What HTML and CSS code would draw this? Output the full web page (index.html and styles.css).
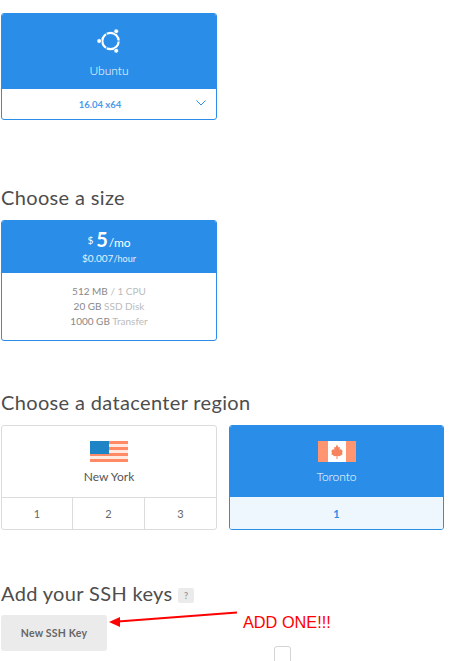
FILE: index.html
```html
<!DOCTYPE html>
<html lang="en">
<head>
    <meta charset="UTF-8">
    <title>Create Droplet</title>
    <link rel="stylesheet" href="styles.css">
</head>
<body>

<div class="page">
    <!-- image -->
    <div class="card selected">
        <div class="card-top image-top">
            <svg class="ubuntu-icon" width="26" height="26" viewBox="0 0 26 26">
                <circle cx="14.5" cy="13" r="8.2" fill="none" stroke="#fff" stroke-width="2.2"/>
                <g stroke="#2a8ee9" stroke-width="1">
                    <line x1="14.5" y1="13" x2="25" y2="13"/>
                    <line x1="14.5" y1="13" x2="9" y2="3.5"/>
                    <line x1="14.5" y1="13" x2="9" y2="22.5"/>
                </g>
                <circle cx="3.2" cy="13" r="2.3" fill="#fff" stroke="#2a8ee9" stroke-width="0.6"/>
                <circle cx="20.2" cy="3.2" r="2.3" fill="#fff" stroke="#2a8ee9" stroke-width="0.6"/>
                <circle cx="20.2" cy="22.8" r="2.3" fill="#fff" stroke="#2a8ee9" stroke-width="0.6"/>
            </svg>
            <div class="card-name name-ubuntu">Ubuntu</div>
        </div>
        <div class="version-row">
            <span class="version">16.04 x64</span>
            <svg class="chevron" width="10" height="6" viewBox="0 0 10 6">
                <path d="M0.5 0.5 L5 5 L9.5 0.5" fill="none" stroke="#2a8ee9" stroke-width="1"/>
            </svg>
        </div>
    </div>

    <h2 class="heading heading-size">Choose a size</h2>
    <div class="card selected">
        <div class="card-top size-top">
            <div class="price"><span class="dollar">$</span><span class="amount">5</span><span class="per">/mo</span></div>
            <div class="hourly">$0.007<span class="per-hour">/hour</span></div>
        </div>
        <div class="size-specs">
            <div><b>512 MB</b> / 1 CPU</div>
            <div><b>20 GB</b> SSD Disk</div>
            <div><b>1000 GB</b> Transfer</div>
        </div>
    </div>

    <h2 class="heading heading-region">Choose a datacenter region</h2>
    <div class="regions">
        <div class="card region">
            <div class="region-top">
                <svg width="38" height="21" viewBox="0 0 38 21">
                    <rect width="38" height="21" fill="#ffe9e0"/>
                    <rect y="0" width="38" height="3" fill="#ff8a65"/>
                    <rect y="6" width="38" height="3" fill="#ff8a65"/>
                    <rect y="12" width="38" height="3" fill="#ff8a65"/>
                    <rect y="18" width="38" height="3" fill="#ff8a65"/>
                    <rect width="19" height="13" fill="#1f84c6"/>
                </svg>
                <div class="card-name name-dark">New York</div>
            </div>
            <div class="datacenters">
                <div class="dc">1</div>
                <div class="dc">2</div>
                <div class="dc">3</div>
            </div>
        </div>
        <div class="card region region-right selected">
            <div class="region-top blue">
                <svg width="38" height="21" viewBox="0 0 38 21">
                    <rect width="38" height="21" fill="#fff"/>
                    <rect width="10" height="21" fill="#ff9571"/>
                    <rect x="28" width="10" height="21" fill="#ff9571"/>
                    <path d="M19 3.5 L20.6 6.5 L22 6 L21.6 9 L23 8 L24.6 10 L24 12.4 L25 13 L21.5 15.2 L19.5 15 L19.5 18 L18.5 18 L18.5 15 L16.5 15.2 L13 13 L14 12.4 L13.4 10 L15 8 L16.4 9 L16 6 L17.4 6.5 Z" fill="#f5845c"/>
                </svg>
                <div class="card-name">Toronto</div>
            </div>
            <div class="datacenters dc-selected">
                <div class="dc">1</div>
            </div>
        </div>
    </div>

    <h2 class="heading heading-ssh">Add your SSH keys <span class="help">?</span></h2>
    <button class="ssh-btn">New SSH Key</button>
    <div class="fake-check"></div>

    <!-- annotation on top of the screenshot -->
    <svg class="arrow" width="130" height="24" viewBox="0 0 130 24">
        <line x1="128" y1="2.5" x2="9" y2="11.5" stroke="#f00" stroke-width="2"/>
        <path d="M0 12 L11 7 L11 17 Z" fill="#f00"/>
    </svg>
    <span class="note">ADD ONE!!!</span>
</div>

</body>
</html>
```

FILE: styles.css
```css
html, body {
    margin: 0;
    height: 661px;
    overflow: hidden;
    background: white;
}

.page {
    position: relative;
    height: 661px;
    padding: 13px 0 0 1px;
    box-sizing: border-box;
    font-family: Lato, "Open Sans", sans-serif;
    color: #444;
}

.card {
    width: 216px;
    box-sizing: border-box;
    border: 1px solid #dcdcdc;
    border-radius: 3px;
    overflow: hidden;
    background: white;
}

.card.selected {
    border-color: #2a8ee9;
}

.card-top {
    background-color: #2a8ee9;
    color: white;
    text-align: center;
}

.image-top {
    height: 75px;
    padding-top: 14px;
    box-sizing: border-box;
}

.ubuntu-icon {
    display: block;
    margin: 0 auto;
}

.card-name {
    font-size: 12px;
    font-weight: 300;
    line-height: 16px;
    margin-top: 12px;
    color: white;
}

.name-ubuntu {
    margin-top: 9px;
}

.name-dark {
    font-weight: normal;
    color: #555;
}

.version-row {
    position: relative;
    height: 30px;
    padding-right: 18px;
    box-sizing: border-box;
    display: flex;
    align-items: center;
    justify-content: center;
}

.version {
    font-size: 9.5px;
    font-weight: bold;
    color: #4a9cea;
}

.chevron {
    position: absolute;
    right: 10px;
    top: 11px;
}

.heading {
    font-size: 20px;
    font-weight: normal;
    letter-spacing: 0.35px;
    line-height: 24px;
    margin: 0;
    color: #4d4d4d;
}

.heading-size {
    margin-top: 65px;
    margin-bottom: 11px;
}

.heading-region {
    margin-top: 49px;
    margin-bottom: 11px;
}

.heading-ssh {
    margin-top: 51px;
    margin-bottom: 10px;
}

.size-top {
    height: 52px;
    padding-top: 8px;
    box-sizing: border-box;
}

.price {
    line-height: 20px;
    font-size: 12px;
}

.dollar {
    font-size: 10px;
    vertical-align: 3px;
    margin-right: 3px;
}

.amount {
    font-size: 20px;
    font-weight: bold;
}

.per {
    font-size: 12px;
    margin-left: 1px;
}

.hourly {
    font-size: 10px;
    line-height: 11px;
    color: #e4f0fc;
}

.per-hour {
    font-size: 9px;
}

.size-specs {
    padding-top: 11px;
    height: 67px;
    box-sizing: border-box;
    text-align: center;
    font-size: 10px;
    line-height: 15px;
    color: #bbb;
}

.size-specs b {
    font-weight: normal;
    color: #888;
}

.regions {
    display: flex;
    gap: 12px;
}

.region {
    height: 105px;
    display: flex;
    flex-direction: column;
}

.region-right {
    width: 215px;
}

.region-top {
    height: 71px;
    padding-top: 15px;
    box-sizing: border-box;
    text-align: center;
}

.region-top svg {
    display: block;
    margin: 0 auto;
}

.region-top .card-name {
    margin-top: 7px;
}

.region-top.blue {
    background-color: #2a8ee9;
}

.datacenters {
    flex: 1;
    display: flex;
    border-top: 1px solid #dcdcdc;
}

.dc {
    flex: 1;
    display: flex;
    align-items: center;
    justify-content: center;
    font-size: 11px;
    color: #666;
    border-left: 1px solid #dcdcdc;
}

.dc:first-child {
    flex: 0 0 70px;
    border-left: none;
}

.dc-selected {
    background-color: #eef6fe;
    border-top: none;
}

.dc-selected .dc {
    flex: 1;
    color: #2a8ee9;
    font-weight: bold;
}

.help {
    display: inline-block;
    width: 16px;
    height: 15px;
    border-radius: 2px;
    background-color: #ebebeb;
    color: #999;
    font-size: 9px;
    font-weight: bold;
    letter-spacing: 0;
    line-height: 15px;
    text-align: center;
    vertical-align: 2px;
}

.ssh-btn {
    display: block;
    width: 106px;
    height: 36px;
    padding: 0;
    border: none;
    border-radius: 3px;
    background-color: #ebebeb;
    color: #666;
    font-family: Lato, "Open Sans", sans-serif;
    font-size: 10.5px;
    font-weight: bold;
    letter-spacing: 0.2px;
}

.fake-check {
    position: absolute;
    left: 274px;
    top: 646px;
    width: 17px;
    height: 20px;
    box-sizing: border-box;
    border: 1px solid #d4d4d4;
    border-radius: 3px;
}

.arrow {
    position: absolute;
    left: 109px;
    top: 610px;
}

.note {
    position: absolute;
    left: 243px;
    top: 613px;
    font-family: "Liberation Sans", Arial, sans-serif;
    font-size: 16.3px;
    line-height: 19px;
    color: #f00;
}
```
